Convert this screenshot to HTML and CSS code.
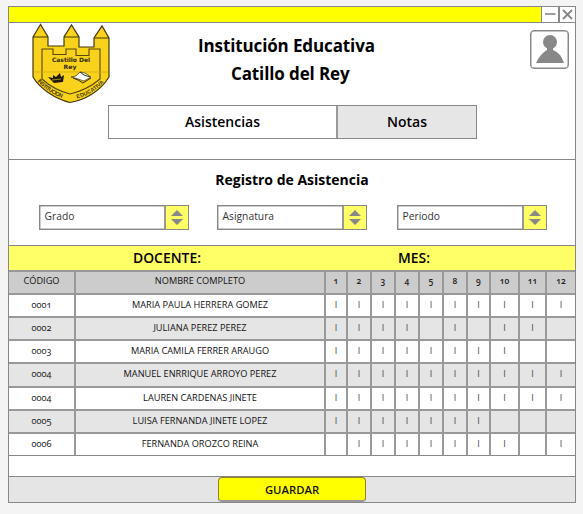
FILE: index.html
```html
<!DOCTYPE html>
<html lang="es">
<head>
<meta charset="utf-8">
<title>Registro de Asistencia</title>
<link rel="stylesheet" href="styles.css">
</head>
<body>
<main class="window">
  <div class="titlebar">
    <span class="winbtn"><svg width="14" height="14" viewBox="0 0 14 14"><path d="M2 7h10.500" stroke="#888" stroke-width="1.600"/></svg></span>
    <span class="winbtn close"><svg width="14" height="14" viewBox="0 0 14 14"><path d="M3 3l9 9M12 3l-9 9" stroke="#888" stroke-width="1.900"/></svg></span>
  </div>
  <header class="header">
    <svg class="logo" width="84" height="84" viewBox="0 0 84 84">
      <defs>
        <path id="arcL" d="M7.500 58Q16 68.500 33 75.500"/>
        <path id="arcR" d="M47 75.500Q66 70 75.500 57"/>
      </defs>
      <path d="M3 14L10.500 1.500L18 14V23H34V14L41.500 2L49 14V24H64V15L72 3L79 15V54C70 69 54 77 40 79.500C26 76 10 66 3 54Z" fill="#f9d31b" stroke="#45370b" stroke-width="1.200"/>
      <path d="M3 14H18M34 14H49M64 15H79" stroke="#45370b" stroke-width="1.200"/>
      <path d="M12 56V26H23V31.500H36V26H46V32.500H59V26H70V56Q57 67 40 71Q24 67 12 56Z" fill="none" stroke="#5b480f" stroke-width="1.100"/>
      <path d="M4 49H78" stroke="#d8a512" stroke-width=".7"/>
      <text class="logo-name" x="41" y="39" textLength="38" lengthAdjust="spacingAndGlyphs">Castillo Del</text>
      <text class="logo-name" x="40" y="45.500" textLength="13" lengthAdjust="spacingAndGlyphs">Rey</text>
      <path d="M18 54l5 1 0-3 3 2 4-4 1 4 3-2-1 7-9 1z" fill="#211a08"/>
      <path d="M22 57l9-1" stroke="#f9d31b" stroke-width=".6"/>
      <path d="M41 54l5-1 4-4 5 1 6 4-7 4-6-2z" fill="#fff" stroke="#3b300d" stroke-width=".7"/>
      <path d="M43 55l5 2 5 3 8-5M50 49l4 3 6 2" fill="none" stroke="#211a08" stroke-width=".9"/>
      <text class="logo-arc"><textPath href="#arcL" textLength="30">INSTITUCION</textPath></text>
      <text class="logo-arc"><textPath href="#arcR" textLength="32">EDUCATIVA</textPath></text>
    </svg>
    <div class="heading">
      <h1><span class="t1">Institución Educativa</span><span class="t2">Catillo del Rey</span></h1>
      <nav class="tabs"><span class="tab">Asistencias</span><span class="tab alt">Notas</span></nav>
    </div>
    <span class="avatar"><svg width="36" height="36" viewBox="0 0 36 36"><circle cx="18" cy="11" r="7" fill="#888"/><path d="M15 15h6v4q8 3 11 13H4q4-9 11-13z" fill="#888"/></svg></span>
  </header>
  <section class="filters">
    <h2>Registro de Asistencia</h2>
    <div class="selects">
      <div class="select"><span>Grado</span><i><svg width="12" height="15" viewBox="0 0 12 15"><path d="M6 0l6 6H0zM6 15l6-6H0z" fill="#888"/></svg></i></div>
      <div class="select"><span>Asignatura</span><i><svg width="12" height="15" viewBox="0 0 12 15"><path d="M6 0l6 6H0zM6 15l6-6H0z" fill="#888"/></svg></i></div>
      <div class="select"><span>Periodo</span><i><svg width="12" height="15" viewBox="0 0 12 15"><path d="M6 0l6 6H0zM6 15l6-6H0z" fill="#888"/></svg></i></div>
    </div>
  </section>
  <div class="band"><span class="docente">DOCENTE:</span><span class="mes">MES:</span></div>
  <section class="grid">
    <div class="row head"><b>CÓDIGO</b><b>NOMBRE COMPLETO</b><b>1</b><b>2</b><b>3</b><b>4</b><b>5</b><b>8</b><b>9</b><b>10</b><b>11</b><b>12</b></div>
    <div class="row"><b>0001</b><b>MARIA PAULA HERRERA GOMEZ</b><b>I</b><b>I</b><b>I</b><b>I</b><b>I</b><b>I</b><b>I</b><b>I</b><b>I</b><b>I</b></div>
    <div class="row alt"><b>0002</b><b>JULIANA PEREZ PEREZ</b><b>I</b><b>I</b><b>I</b><b>I</b><b></b><b>I</b><b></b><b>I</b><b>I</b><b></b></div>
    <div class="row"><b>0003</b><b>MARIA CAMILA FERRER ARAUGO</b><b>I</b><b>I</b><b>I</b><b>I</b><b>I</b><b>I</b><b>I</b><b>I</b><b></b><b></b></div>
    <div class="row alt tall"><b>0004</b><b>MANUEL ENRRIQUE ARROYO PEREZ</b><b>I</b><b>I</b><b>I</b><b>I</b><b>I</b><b>I</b><b>I</b><b>I</b><b>I</b><b>I</b></div>
    <div class="row"><b>0004</b><b>LAUREN CARDENAS JINETE</b><b>I</b><b>I</b><b>I</b><b>I</b><b>I</b><b>I</b><b>I</b><b>I</b><b>I</b><b>I</b></div>
    <div class="row alt"><b>0005</b><b>LUISA FERNANDA JINETE LOPEZ</b><b>I</b><b>I</b><b>I</b><b>I</b><b>I</b><b>I</b><b>I</b><b></b><b></b><b></b></div>
    <div class="row last"><b>0006</b><b>FERNANDA OROZCO REINA</b><b></b><b>I</b><b>I</b><b>I</b><b>I</b><b>I</b><b>I</b><b>I</b><b></b><b>I</b></div>
  </section>
  <div class="blank"></div>
  <footer class="footer"><button class="save">GUARDAR</button></footer>
</main>
</body>
</html>
```
FILE: styles.css
```css
* { box-sizing: border-box; }
body { margin: 0; padding: 6px 0 0 8px; background: #f4f4f4; color: #111; font-family: "Open Sans", "Noto Sans", sans-serif; font-variant-numeric: oldstyle-nums; }
svg { display: block; }
.window { width: 568px; height: 497px; border: 1px solid #888; background: #fff; display: flex; flex-direction: column; }
.titlebar { height: 16px; background: #ff0; border-bottom: 1px solid #888; display: flex; justify-content: flex-end; }
.winbtn { width: 17px; height: 15px; background: #fff; border-left: 1px solid #888; padding-left: 1px; }
.winbtn.close { border-left-width: 2px; padding-left: 0; }
.header { height: 137px; border-bottom: 1px solid #888; display: grid; grid-template-columns: 99px 369px 98px; }
.logo { margin: 0 0 0 21px; }
.heading { display: flex; flex-direction: column; }
h1 { margin: 9px 0 0; font-size: 17px; line-height: 28px; font-weight: 700; letter-spacing: -.12px; color: #000; white-space: nowrap; display: flex; flex-direction: column; }
.t1 { padding-left: 90px; }
.t2 { padding-left: 123px; }
.tabs { width: 369px; height: 34px; margin-top: 17px; border: 1px solid #888; display: grid; grid-template-columns: 227px 1fr; font-weight: 600; font-size: 14px; line-height: 32px; text-align: center; color: #000; }
.tab.alt { background: #e6e6e6; border-left: 2px solid #999; }
.avatar { width: 39px; height: 39px; margin: 7px 0 0 53px; border: 1px solid #888; border-radius: 4px; padding-left: 1px; box-shadow: inset 0 0 0 .5px #888; }
.filters { height: 85px; }
h2 { margin: 8px 0 0; font-size: 14px; line-height: 24px; text-align: center; color: #000; }
.selects { display: grid; grid-template-columns: 178px 180px 150px; margin: 13px 0 0 30px; }
.select { width: 150px; height: 25px; border: 1px solid #888; display: flex; justify-content: space-between; font-size: 10.3px; line-height: 21px; color: #333; padding-left: 4.5px; box-shadow: inset 0 0 0 .5px #999; }
.select i { width: 24px; background: #ff6; border-left: 2px solid #999; padding: 4px 0 0 5px; }
.band { height: 27px; background: #ff6; border-top: 1px solid #888; border-bottom: 2px solid #999; display: grid; grid-template-columns: 124px 265px 1fr; font-size: 13.9px; font-weight: 600; line-height: 24px; color: #000; }
.docente { grid-column: 2; }
.row { height: 23px; display: grid; grid-template-columns: 67px 250px 22px repeat(5, 24px) 23px 29px 27px 28px; background: #fff; }
.row b { border-right: 2px solid #999; border-bottom: 2px solid #999; font-weight: 400; font-size: 9.2px; line-height: 19px; text-align: center; white-space: nowrap; min-width: 0; }
.row b:first-child { font-weight: 500; }
.row b:last-child { border-right: 0; }
.row.head { background: #ccc; }
.row.head b { line-height: 18px; }
.row.alt { background: #e5e5e5; }
.row.tall { height: 24px; }
.row.last { height: 22px; }
.row.last b { border-bottom: 1px solid #888; }
.row b:nth-child(n+3) { font-size: 9px; color: #444; }
.row.head b:nth-child(n+3) { font-weight: 600; font-size: 8.5px; color: #222; }
.blank { height: 20px; }
.footer { flex: 1; background: #e5e5e5; border-top: 1px solid #888; display: flex; justify-content: center; }
.save { width: 148px; height: 25px; border: 1px solid #997f22; border-bottom: 2px solid #999; border-radius: 4px; background: #ff0; font: 600 11.3px/21px "Open Sans", sans-serif; padding: 0; color: #111; }
.logo-name { font: 900 6px "DejaVu Sans", sans-serif; text-anchor: middle; fill: #33290a; }
.logo-arc { font: 700 5.500px "Liberation Sans", sans-serif; fill: #45370b; }
```
